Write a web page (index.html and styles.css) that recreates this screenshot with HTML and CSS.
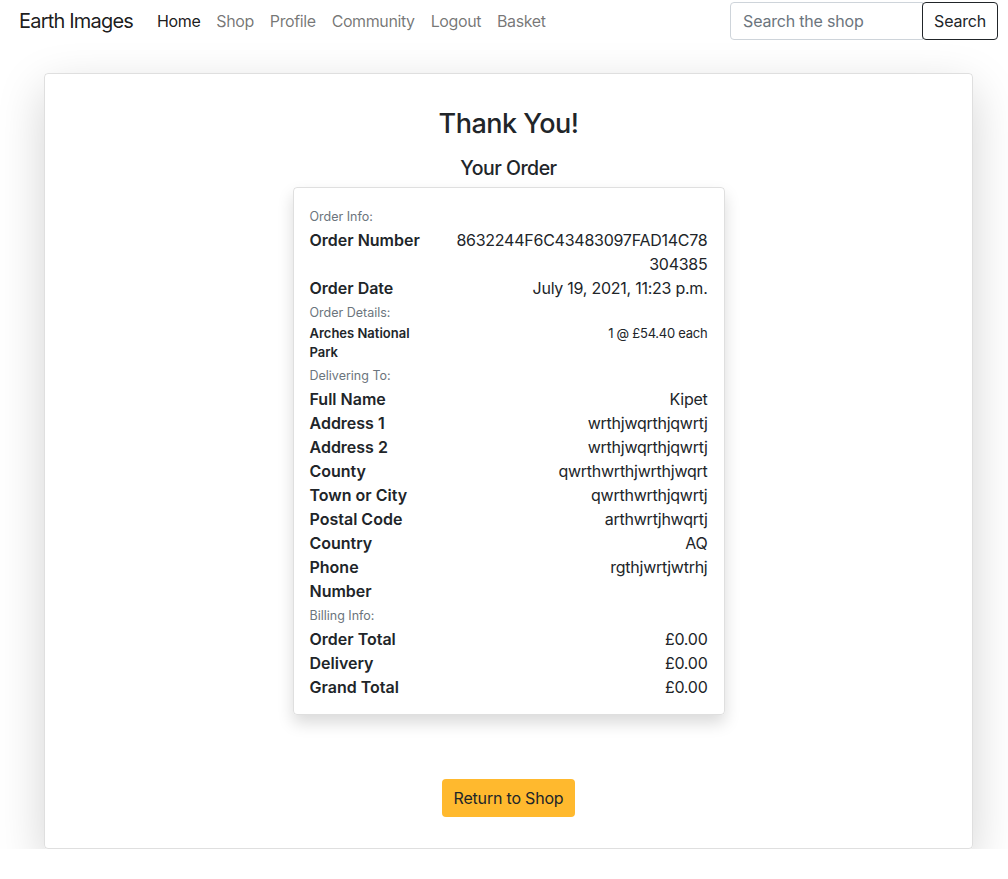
FILE: index.html
```html
<!DOCTYPE html>
<html lang="en">
<head>
<meta charset="utf-8">
<title>Earth Images - Thank You</title>
<link rel="stylesheet" href="styles.css">
</head>
<body>
<nav class="navbar">
  <a class="brand" href="#">Earth Images</a>
  <ul class="nav">
    <li><a class="nav-link active" href="#">Home</a></li>
    <li><a class="nav-link" href="#">Shop</a></li>
    <li><a class="nav-link" href="#">Profile</a></li>
    <li><a class="nav-link" href="#">Community</a></li>
    <li><a class="nav-link" href="#">Logout</a></li>
    <li><a class="nav-link" href="#">Basket</a></li>
  </ul>
  <form class="search">
    <input class="search-input" type="search" placeholder="Search the shop">
    <button class="search-btn" type="button">Search</button>
  </form>
</nav>

<main class="card">
  <h3 class="title">Thank You!</h3>
  <h5 class="subtitle">Your Order</h5>
  <div class="order-card">
    <div class="section">Order Info:</div>
    <div class="row"><div class="label">Order Number</div><div class="value">8632244F6C43483097FAD14C78<wbr>304385</div></div>
    <div class="row"><div class="label">Order Date</div><div class="value">July 19, 2021, 11:23 p.m.</div></div>
    <div class="section">Order Details:</div>
    <div class="row small-row"><div class="label">Arches National Park</div><div class="value">1 @ £54.40 each</div></div>
    <div class="section">Delivering To:</div>
    <div class="row"><div class="label">Full Name</div><div class="value">Kipet</div></div>
    <div class="row"><div class="label">Address 1</div><div class="value">wrthjwqrthjqwrtj</div></div>
    <div class="row"><div class="label">Address 2</div><div class="value">wrthjwqrthjqwrtj</div></div>
    <div class="row"><div class="label">County</div><div class="value">qwrthwrthjwrthjwqrt</div></div>
    <div class="row"><div class="label">Town or City</div><div class="value">qwrthwrthjqwrtj</div></div>
    <div class="row"><div class="label">Postal Code</div><div class="value">arthwrtjhwqrtj</div></div>
    <div class="row"><div class="label">Country</div><div class="value">AQ</div></div>
    <div class="row"><div class="label">Phone Number</div><div class="value">rgthjwrtjwtrhj</div></div>
    <div class="section">Billing Info:</div>
    <div class="row"><div class="label">Order Total</div><div class="value">£0.00</div></div>
    <div class="row"><div class="label">Delivery</div><div class="value">£0.00</div></div>
    <div class="row"><div class="label">Grand Total</div><div class="value">£0.00</div></div>
  </div>
  <div class="actions">
    <a class="btn-shop" href="#">Return to Shop</a>
  </div>
</main>
</body>
</html>
```

FILE: styles.css
```css
* { box-sizing: border-box; }

body {
  margin: 0;
  font-family: Inter, "Noto Sans", "Liberation Sans", sans-serif;
  font-size: 16px;
  line-height: 1.5;
  color: #212529;
  background: #fff;
}

a { text-decoration: none; }

.navbar {
  display: flex;
  align-items: center;
  height: 41px;
  padding: 1px 10px 0 19px;
}

.brand {
  font-size: 20px;
  color: rgba(0, 0, 0, 0.9);
  margin-right: 16px;
  letter-spacing: -0.8px;
}

.nav {
  display: flex;
  list-style: none;
  margin: 0;
  padding: 0;
  flex: 1;
}

.nav-link {
  display: block;
  padding: 8px 8px;
  color: rgba(0, 0, 0, 0.55);
  letter-spacing: -0.4px;
}

.nav-link.active { color: rgba(0, 0, 0, 0.9); }

.search { display: flex; }

.search-input {
  width: 193px;
  height: 38px;
  border: 1px solid #ced4da;
  border-radius: 4px 0 0 4px;
  padding: 6px 12px;
  font: inherit;
  letter-spacing: -0.2px;
  color: #212529;
  outline: none;
}

.search-input::placeholder { color: #6c757d; }

.search-btn {
  height: 38px;
  margin-left: -1px;
  border: 1px solid #212529;
  border-radius: 4px;
  background: #fff;
  padding: 6px 11px;
  font: inherit;
  letter-spacing: -0.2px;
  color: #212529;
}

.card {
  width: 929px;
  margin: 32px 0 0 44px;
  border: 1px solid rgba(0, 0, 0, 0.125);
  border-radius: 4px;
  box-shadow: 0 16px 48px rgba(0, 0, 0, 0.175);
  padding: 33px 16px 31px;
  display: flex;
  flex-direction: column;
  align-items: center;
}

.title {
  font-size: 27px;
  font-weight: 500;
  line-height: 1.2;
  letter-spacing: -0.5px;
  margin: 1px 0 17px;
}

.subtitle {
  font-size: 19.5px;
  font-weight: 500;
  line-height: 1.2;
  letter-spacing: -0.5px;
  margin: 0 0 6px;
}

.order-card {
  width: 432px;
  border: 1px solid rgba(0, 0, 0, 0.125);
  border-radius: 4px;
  box-shadow: 0 8px 16px rgba(0, 0, 0, 0.15);
  padding: 16px 16px 15px;
}

.section {
  font-size: 12.5px;
  line-height: 22px;
  padding-top: 2px;
  color: #6c757d;
}

.row {
  display: grid;
  grid-template-columns: 112px 1fr;
  column-gap: 24px;
}

.label { font-weight: 600; }

.value {
  text-align: right;
  letter-spacing: -0.25px;
}

.small-row {
  font-size: 13px;
  line-height: 19.5px;
}

.actions {
  margin-top: 64px;
}

.btn-shop {
  display: inline-block;
  padding: 7px 12px;
  border-radius: 4px;
  background: #ffb92e;
  color: #212529;
  line-height: 24px;
  letter-spacing: -0.2px;
}
```
